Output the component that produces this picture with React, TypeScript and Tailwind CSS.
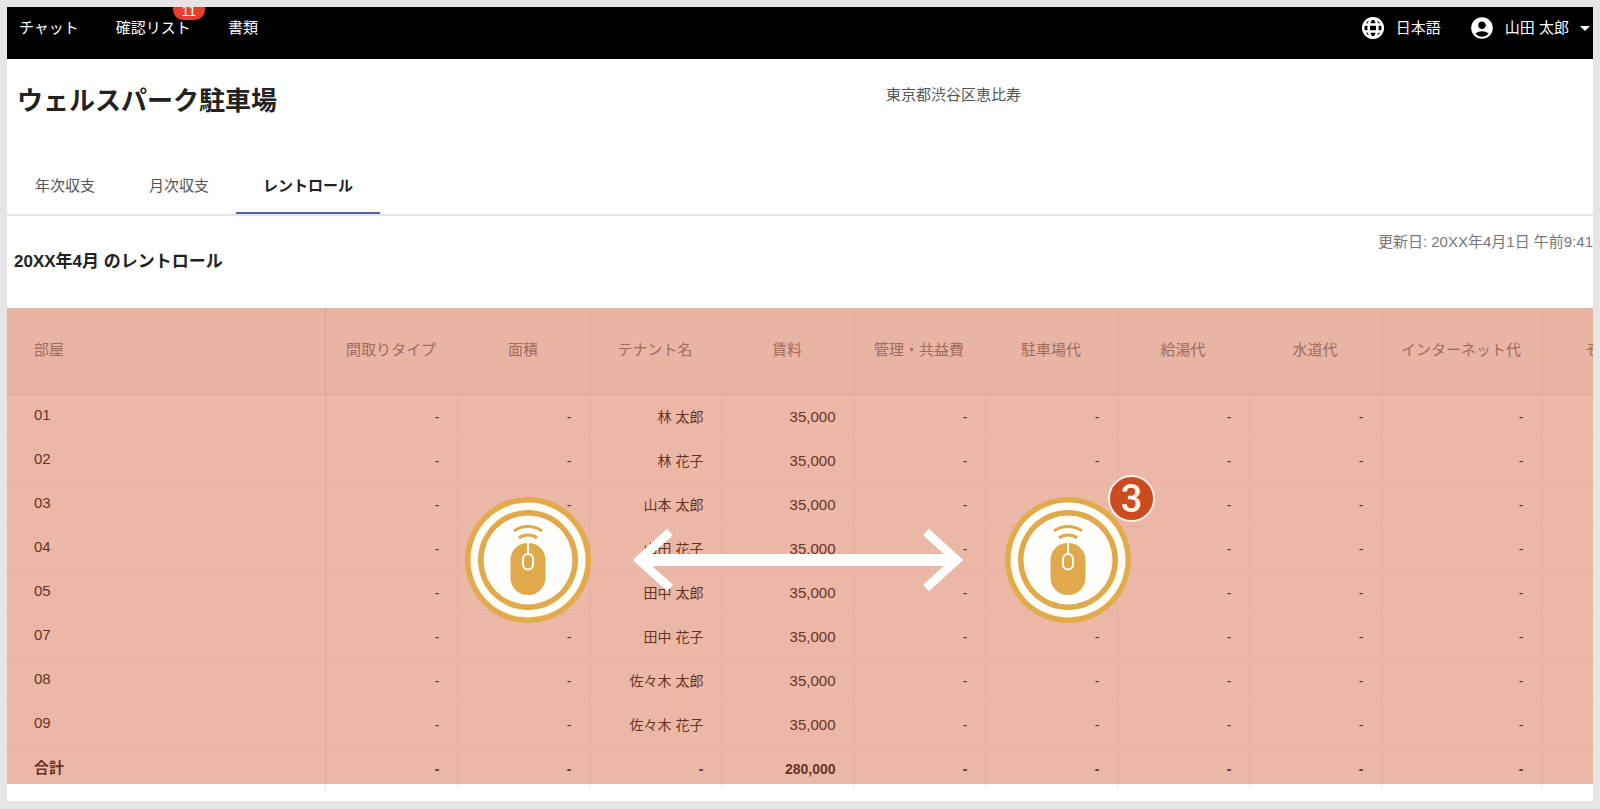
import { FC } from "react";
import { MdAccountCircle, MdArrowDropDown } from "react-icons/md";
import clsx from "clsx";

type Row = {
  room: string;
  tenant: string;
  rent: string;
};

const rows: Row[] = [
  { room: "01", tenant: "林 太郎", rent: "35,000" },
  { room: "02", tenant: "林 花子", rent: "35,000" },
  { room: "03", tenant: "山本 太郎", rent: "35,000" },
  { room: "04", tenant: "山田 花子", rent: "35,000" },
  { room: "05", tenant: "田中 太郎", rent: "35,000" },
  { room: "07", tenant: "田中 花子", rent: "35,000" },
  { room: "08", tenant: "佐々木 太郎", rent: "35,000" },
  { room: "09", tenant: "佐々木 花子", rent: "35,000" },
  { room: "合計", tenant: "-", rent: "280,000" },
];

const columns = [
  { label: "部屋", width: "w-[318px]" },
  { label: "間取りタイプ", width: "w-[132px]" },
  { label: "面積", width: "w-[132px]" },
  { label: "テナント名", width: "w-[132px]" },
  { label: "賃料", width: "w-[132px]" },
  { label: "管理・共益費", width: "w-[132px]" },
  { label: "駐車場代", width: "w-[132px]" },
  { label: "給湯代", width: "w-[132px]" },
  { label: "水道代", width: "w-[132px]" },
  { label: "インターネット代", width: "w-[160px]" },
  { label: "その他", width: "w-[132px]" },
];

const tabs = ["年次収支", "月次収支", "レントロール"];

const GlobeIcon = () => (
  <svg
    viewBox="0 0 26 26"
    className="size-[26px]"
    fill="none"
    stroke="currentColor"
    strokeWidth="2.5"
  >
    <circle cx="13" cy="13" r="9.8" />
    <ellipse cx="13" cy="13" rx="4.4" ry="9.8" />
    <path d="M3.5 9.6h19M3.5 16.4h19" />
  </svg>
);

const Header = () => (
  <header className="flex h-[52px] items-start justify-between overflow-hidden bg-black pl-3 text-[15px] leading-[42px] text-white">
    <nav className="flex gap-[37px]">
      <a href="#chat">チャット</a>
      <a href="#checklist" className="relative">
        確認リスト
        <span className="absolute -top-2 -right-[14px] h-[21px] w-8 rounded-full bg-[#e5402f] text-center text-[14px] leading-6">
          11
        </span>
      </a>
      <a href="#documents">書類</a>
    </nav>
    <div className="flex gap-7">
      <button className="flex items-center gap-[10px]">
        <GlobeIcon />
        日本語
      </button>
      <button className="flex items-center gap-[10px]">
        <MdAccountCircle size={26} />
        <span className="flex items-center gap-1">
          山田 太郎
          <MdArrowDropDown size={24} className="-mr-1" />
        </span>
      </button>
    </div>
  </header>
);

const Tabs: FC<{ active: string }> = ({ active }) => (
  <div role="tablist" className="flex border-b-2 border-[#e6e6e6] pl-px">
    {tabs.map((tab) => (
      <button
        key={tab}
        role="tab"
        aria-selected={tab === active}
        className={clsx(
          "h-[58px] border-b-2 px-[27px] pt-1 text-[15px]",
          tab === active
            ? "border-[#4a69a5] font-bold text-[#222]"
            : "border-transparent text-[#555]"
        )}
      >
        {tab}
      </button>
    ))}
  </div>
);

const RentRollTable = () => (
  <table className="w-max table-fixed border-collapse text-[14px] text-[#222]">
    <thead>
      <tr className="h-[86px] border-b border-[#e4e4e4] bg-[#fafafa]">
        {columns.map(({ label, width }, i) => (
          <th
            key={label}
            className={clsx(
              width,
              "border-r pb-[2px] text-[15px] font-normal whitespace-nowrap text-[#808080]",
              i === 0 ? "border-[#dcdcdc] pl-[27px] text-left" : "border-[#f1f1f1]"
            )}
          >
            {label}
          </th>
        ))}
      </tr>
    </thead>
    <tbody>
      {rows.map(({ room, tenant, rent }) => {
        const isTotal = room === "合計";
        return (
          <tr key={room} className="h-11 border-b border-[#f3f3f3] last:border-b-0">
            <th
              className={clsx(
                "border-r border-[#e4e4e4] pl-[27px] text-left text-[15px]",
                isTotal ? "font-bold" : "pb-px font-normal"
              )}
            >
              {room}
            </th>
            {["-", "-", tenant, rent, "-", "-", "-", "-", "-", "-"].map(
              (value, i) => (
                <td
                  key={i}
                  className={clsx(
                    "border-r border-[#f0f0f0] pt-[2px] pr-[17px] text-right",
                    isTotal && "font-bold",
                    value === rent && !isTotal && "text-[15px]"
                  )}
                >
                  {value}
                </td>
              )
            )}
          </tr>
        );
      })}
    </tbody>
  </table>
);

const MouseIcon = () => (
  <svg viewBox="0 0 126 126" className="size-[126px] shrink-0" fill="none">
    <circle cx="63" cy="63" r="63" fill="#e3aa49" />
    <circle cx="63" cy="63" r="57.5" fill="#fffdf5" />
    <circle cx="63" cy="63" r="50" fill="#e0a94c" />
    <circle cx="63" cy="63" r="44.5" fill="#fffefc" />
    <path
      d="M49 34C57 28 69 28 77 34M54 41C59 37 67 37 72 41"
      stroke="#e0a94c"
      strokeWidth="3"
    />
    <rect x="45.5" y="46" width="35" height="52" rx="17" fill="#e0a94c" />
    <path d="M63 46v11" stroke="#fffefc" strokeWidth="2" />
    <rect
      x="58"
      y="57"
      width="10"
      height="15.5"
      rx="5"
      stroke="#fffefc"
      strokeWidth="2"
    />
  </svg>
);

// Hint drawn over the table: it can be scrolled sideways
const ScrollHint = () => (
  <div className="pointer-events-none absolute inset-x-0 top-0 bottom-[6px] flex items-center justify-center gap-[42px] bg-[#cd4d25]/40 pt-7 pr-1">
    <MouseIcon />
    <svg
      viewBox="0 0 330 64"
      className="h-16 w-[330px] shrink-0"
      fill="none"
      stroke="#fff"
    >
      <path d="M8 32H322" strokeWidth="12" />
      <path d="M37 4L6 32L37 60M293 4L324 32L293 60" strokeWidth="8.5" />
    </svg>
    <div className="relative">
      <MouseIcon />
      <span className="absolute -top-[22px] -right-6 flex size-[47px] items-center justify-center rounded-full border-2 border-[#fff3e6] bg-[#cc4a20] font-[Roboto,sans-serif] text-[38px] leading-none font-medium text-[#fff3e6]">
        3
      </span>
    </div>
  </div>
);

const App = () => {
  return (
    <div className="min-h-screen bg-[#e5e5e5] p-[7px] font-['Liberation_Sans','Noto_Sans_CJK_JP',sans-serif]">
      <div className="overflow-hidden bg-white pb-[11px]">
        <Header />
        <div className="grid grid-cols-[869px_1fr] items-start pt-[22px] pl-[10px]">
          <h1 className="h-[75px] text-[26px] leading-10 font-bold text-[#222]">
            ウェルスパーク駐車場
          </h1>
          <p className="text-[15px] leading-7 text-[#555]">東京都渋谷区恵比寿</p>
        </div>
        <Tabs active="レントロール" />
        <div className="flex h-[92px] items-start justify-between pl-[7px]">
          <h2 className="pt-8 text-[17px] leading-7 font-bold text-[#222]">
            20XX年4月 のレントロール
          </h2>
          <p className="pt-3 text-[15px] leading-7 text-[#777]">
            更新日: 20XX年4月1日 午前9:41
          </p>
        </div>
        <div className="relative overflow-hidden">
          <RentRollTable />
          <ScrollHint />
        </div>
      </div>
    </div>
  );
};

export default App;
